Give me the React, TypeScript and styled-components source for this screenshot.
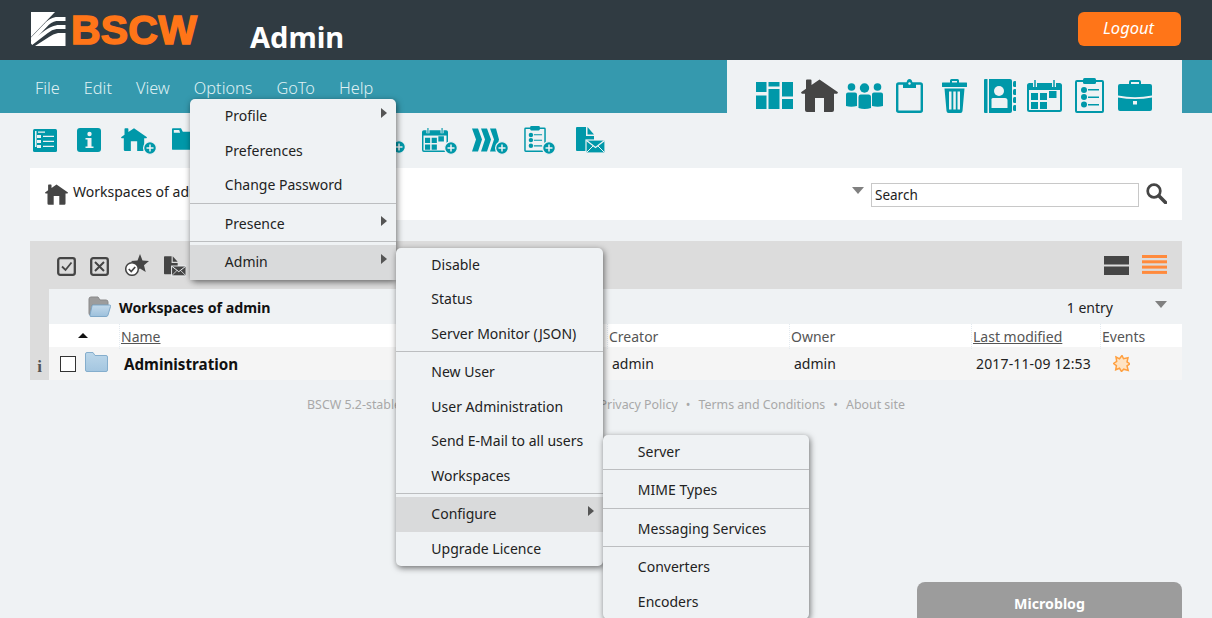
import React from "react";
import styled, { createGlobalStyle } from "styled-components";

const FONT = `"Noto Sans", "Open Sans", sans-serif`;
const TEAL = "#0098a9";
const DARK = "#454545";

const Global = createGlobalStyle`
  html, body { margin: 0; padding: 0; height: 100%; overflow: hidden; }
  body { background: #eff2f4; font-family: ${FONT}; font-size: 14px; color: #222; }
  #root { height: 618px; }
  * { box-sizing: border-box; }
`;

const Page = styled.div`
  position: relative;
  width: 1212px;
  height: 618px;
  overflow: hidden;
`;

/* ---------- header ---------- */
const Header = styled.header`
  height: 60px;
  background: #303b42;
  display: flex;
  align-items: flex-start;
  padding: 12px 31px 0 31px;
`;
const Logo = styled.div`
  display: flex;
  align-items: flex-start;
  gap: 5px;
  width: 219px;
`;
const LogoWord = styled.span`
  font-family: "Liberation Sans", Arial, sans-serif;
  font-weight: 700;
  font-size: 41px;
  line-height: 36px;
  color: #ff7518;
  -webkit-text-stroke: 1.5px #ff7518;
  letter-spacing: 0.2px;
`;
const AppTitle = styled.h1`
  margin: 8px 0 0;
  font-size: 29px;
  line-height: 34px;
  font-weight: 700;
  color: #fff;
  flex: 1;
`;
const LogoutButton = styled.button`
  width: 103px;
  height: 34px;
  border: 0;
  border-radius: 6px;
  background: #ff7518;
  color: #fff;
  font: italic 400 16.5px ${FONT};
  padding: 0 2px 3px 0;
`;

/* ---------- nav ---------- */
const NavBar = styled.nav`
  height: 53px;
  background: #3599ae;
  display: flex;
  justify-content: space-between;
  padding: 0 30px 0 35px;
`;
const NavMenu = styled.ul`
  list-style: none;
  margin: 0;
  padding: 17px 0 0;
  display: flex;
  gap: 24px;
`;
const NavItem = styled.li`
  position: relative;
  font-size: 16.3px;
  font-weight: 300;
  line-height: 22px;
  height: 22px;
  color: #dff0f3;
`;
const TabPanel = styled.div`
  width: 455px;
  background: #eff2f4;
  padding: 18px 0 0 25px;
  display: flex;
  align-items: flex-start;
`;
const TabCell = styled.span`
  width: 45px;
  height: 35px;
  display: flex;
  align-items: center;
  justify-content: center;
  color: ${(p) => (p.$active ? DARK : TEAL)};
`;

/* ---------- action toolbar ---------- */
const ActionBar = styled.div`
  display: flex;
  height: 55px;
  padding: 14px 0 0 33px;
  color: ${TEAL};
`;
const ActionCell = styled.span`
  width: ${(p) => p.$w}px;
  height: 27px;
  display: block;
  margin-top: ${(p) => p.$top || 0}px;
`;

/* ---------- breadcrumb ---------- */
const CrumbBar = styled.div`
  margin: 0 30px;
  height: 52px;
  background: #fff;
  display: flex;
  align-items: center;
  padding: 0 15px;
  color: ${DARK};
`;
const CrumbText = styled.span`
  margin: -5px 0 0 5px;
  color: #222;
  font-size: 14px;
  flex: 1;
`;
const DownArrow = styled.i`
  display: block;
  width: 0;
  height: 0;
  border-left: 6.5px solid transparent;
  border-right: 6.5px solid transparent;
  border-top: 7px solid #808080;
`;
const CrumbArrow = styled(DownArrow)`
  margin: -8px 7px 0 0;
`;
const SearchInput = styled.div`
  width: 268px;
  height: 24px;
  margin-top: 2px;
  border: 1px solid #c8c8c8;
  background: #fff;
  color: #222;
  font-size: 13.5px;
  line-height: 22px;
  padding-left: 3px;
`;
const SearchIcon = styled.span`
  display: block;
  margin: -1px 0 0 7px;
  height: 21px;
  color: ${DARK};
`;

/* ---------- list ---------- */
const ListPanel = styled.section`
  margin: 21px 30px 0;
`;
const ListTools = styled.div`
  height: 48px;
  background: #dcdcdc;
  display: flex;
  align-items: center;
  padding: 2px 15px 0 27px;
  color: ${DARK};
`;
const ToolIcon = styled.span`
  margin-left: ${(p) => p.$gap || 0}px;
  margin-top: ${(p) => -(p.$lift || 0)}px;
  height: 24px;
  display: flex;
  align-items: center;
`;
const Spacer = styled.span`
  flex: 1;
`;
const ListBody = styled.div`
  display: grid;
  grid-template-columns: 19px 1fr;
`;
const Gutter = styled.div`
  background: #dcdcdc;
  display: flex;
  align-items: flex-end;
  justify-content: center;
  padding-bottom: 5px;
  color: #555;
`;
const InfoGlyph = styled.span`
  font: 700 17px "Liberation Serif", serif;
  line-height: 16px;
`;
const Columns = styled.div`
  min-width: 0;
`;
const TitleRow = styled.div`
  height: 35px;
  display: flex;
  align-items: center;
  padding: 0 15px 0 39px;
`;
const TitleText = styled.strong`
  margin: 2px 0 0 8px;
  font-size: 14.2px;
  font-weight: 700;
  color: #111;
  flex: 1;
`;
const EntryCount = styled.span`
  margin: 2px 42px 0 0;
  font-size: 14px;
`;
const TitleArrow = styled(DownArrow)`
  margin-top: -4px;
`;
const gridCols = "72px 488px 182px 182px 129px 80px";
const HeadRow = styled.div`
  display: grid;
  grid-template-columns: ${gridCols};
  height: 23px;
  background: #fff;
  color: #555;
  font-size: 14px;
  line-height: 25px;
`;
const HeadCell = styled.span`
  position: relative;
  text-decoration: ${(p) => (p.$link ? "underline" : "none")};
  &::before {
    content: "";
    position: absolute;
    left: -2px;
    top: 0;
    bottom: 0;
    border-left: 1px dotted #e3eaf0;
  }
`;
const SortCell = styled.span`
  display: flex;
  justify-content: flex-end;
  padding: 9px 33px 0 0;
`;
const SortArrow = styled.i`
  display: block;
  width: 0;
  height: 0;
  border-left: 5.5px solid transparent;
  border-right: 5.5px solid transparent;
  border-bottom: 5px solid #111;
`;
const ItemRow = styled.div`
  display: grid;
  grid-template-columns: ${gridCols};
  height: 33px;
  background: #f5f5f5;
  align-items: center;
  font-size: 14px;
  color: #222;
`;
const RowStart = styled.span`
  display: flex;
  align-items: center;
  padding-left: 11px;
  gap: 9px;
`;
const RowCheck = styled.span`
  flex: none;
  width: 16px;
  height: 16px;
  border: 1px solid #333;
  background: #fff;
`;
const RowFolder = styled.span`
  flex: none;
  margin-top: -4px;
  height: 20px;
`;
const RowName = styled.strong`
  font-size: 15.2px;
  font-weight: 700;
  color: #111;
  padding-left: 3px;
`;
const RowCell = styled.span`
  padding-left: 3px;
`;
const RowDate = styled(RowCell)`
  letter-spacing: 0.15px;
`;
const EventCell = styled.span`
  padding-left: 11px;
  height: 17px;
`;

/* ---------- footer ---------- */
const Footer = styled.footer`
  display: flex;
  justify-content: center;
  gap: 8px;
  margin-top: 17px;
  font-size: 12.4px;
  line-height: 16px;
  color: #a8a8a8;
`;

/* ---------- microblog ---------- */
const Microblog = styled.div`
  position: absolute;
  left: 917px;
  top: 582px;
  width: 265px;
  height: 60px;
  border-radius: 8px 8px 0 0;
  background: #9c9c9c;
  color: #fff;
  font-weight: 700;
  font-size: 14.2px;
  text-align: center;
  padding-top: 12px;
  line-height: 20px;
`;

/* ---------- menus ---------- */
const Menu = styled.div`
  position: absolute;
  z-index: 5;
  left: ${(p) => p.$left};
  top: ${(p) => p.$top}px;
  width: 206.5px;
  background: #eff2f4;
  border-radius: 5px;
  box-shadow: 1px 2px 6px rgba(0, 0, 0, 0.55);
  color: #222;
  font-size: 14px;
  font-weight: 400;
`;
const MenuItem = styled.div`
  position: relative;
  height: 34.5px;
  line-height: 33px;
  padding-left: 35px;
  white-space: nowrap;
  background: ${(p) => (p.$open ? "#d9dadb" : "transparent")};
`;
const MenuRule = styled.div`
  height: 1px;
  margin-bottom: 3px;
  background: #bcbec0;
`;
const SubArrow = styled.i`
  position: absolute;
  right: 9px;
  top: 9px;
  width: 0;
  height: 0;
  border-top: 5px solid transparent;
  border-bottom: 5px solid transparent;
  border-left: 6px solid #555;
`;

/* ---------- glyphs ---------- */
type G = { w: number; h: number; node: React.ReactNode };
const W = "#eff2f4";
const glyphs: Record<string, G> = {
  mosaic: {
    w: 37,
    h: 28,
    node: (
      <path
        fill="currentColor"
        d="M0 0h10.5v10H0zM0 13.5h10.5V27H0zM12.5 0h11v4.500h-11zM12.5 7h11v20h-11zM26 0h11v14.5H26zM26 17h11v10H26z"
      />
    ),
  },
  house: {
    w: 37,
    h: 33,
    node: (
      <path
        fill="currentColor"
        d="M18.5 0.5L37 13.2 36.2 14.8H33V31q0 2-2 2h-8V19h-9v14H6q-2 0-2-2V14.8H.8L0 13.2 5 9.800V1.500q0-1 1-1h3.500q1 0 1 1V6z"
      />
    ),
  },
  people: {
    w: 37,
    h: 26,
    node: (
      <g fill="currentColor">
        <circle cx="5.5" cy="4" r="3.8" />
        <circle cx="18.5" cy="5" r="4.7" />
        <circle cx="31.5" cy="4" r="3.8" />
        <path d="M2 9.500h7q2 0 2 2V23Q5 24.500 0 23V11.500q0-2 2-2zM14.500 11.500h8q2.500 0 2.500 2.500V25q-6.500 2-12.500 0V14q0-2.500 2-2.500zM28 9.500h7q2 0 2 2V23q-5 1.500-11 0V11.500q0-2 2-2z" />
      </g>
    ),
  },
  clipboard: {
    w: 27,
    h: 34,
    node: (
      <g>
        <rect x="1.2" y="4.5" width="24.6" height="28.3" rx="1.5" fill="none" stroke="currentColor" strokeWidth="2.4" />
        <path fill="currentColor" d="M7 4h3.500Q11 0 13.500 0T16.500 4H20v5H7z" />
        <circle cx="13.5" cy="4.5" r="1.2" fill={W} />
      </g>
    ),
  },
  trash: {
    w: 25,
    h: 35,
    node: (
      <g fill="currentColor">
        <path d="M8 5V2.500Q8 1 9.500 1h6Q17 1 17 2.500V5h-2V3h-5v2z" />
        <rect x="0" y="4.5" width="25" height="4.5" rx="0.5" />
        <path d="M2.500 10.500h20L20.500 33q-.2 2-2 2h-12q-1.800 0-2-2zM7 13.500V31.500h2.500V13.500zM11.300 13.500V31.500h2.500V13.500zM15.500 13.500V31.500H18V13.500z" fillRule="evenodd" />
      </g>
    ),
  },
  contacts: {
    w: 32,
    h: 34,
    node: (
      <g fill="currentColor">
        <path d="M1 0h2.500v34H1q-1 0-1-1V1q0-1 1-1z" />
        <path d="M5 0h21q2 0 2 2v30q0 2-2 2H5z" />
        <circle cx="15" cy="12" r="5" fill={W} />
        <path fill={W} d="M9 19h12q2.500 0 2.500 2.500V29H7.500v-7.500Q7 19 9 19z" />
        <rect x="29" y="2" width="3.5" height="6" rx="1.5" />
        <rect x="29" y="10" width="3.5" height="6" rx="1.5" />
        <rect x="29" y="18" width="3.5" height="6" rx="1.5" />
        <rect x="29" y="26" width="3.5" height="6" rx="1.5" />
      </g>
    ),
  },
  calendar: {
    w: 35,
    h: 32,
    node: (
      <g>
        <rect x="1" y="4" width="33" height="27" rx="1.5" fill="none" stroke="currentColor" strokeWidth="2" />
        <path fill="currentColor" d="M1 4h33v6H1z" />
        <path stroke={W} strokeWidth="4" d="M8 0v7M27 0v7" />
        <path stroke="currentColor" strokeWidth="1.5" d="M8 0v7M27 0v7" />
        <path fill="currentColor" d="M4 13h7v7H4zM13 13h7v7h-7zM22 11h7.500v7H22zM4 22h7v7H4zM13 22h7v7h-7z" />
      </g>
    ),
  },
  checklist: {
    w: 29,
    h: 35,
    node: (
      <g>
        <rect x="1" y="3" width="27" height="31" rx="1" fill="none" stroke="currentColor" strokeWidth="2" />
        <rect x="8" y="0" width="13" height="6" rx="1.5" fill="currentColor" />
        <g fill="currentColor">
          <circle cx="9" cy="12" r="3" />
          <circle cx="9" cy="19" r="3" />
          <circle cx="9" cy="26.5" r="3" />
          <path d="M13 11h11v1.500H13zM13 18.500h11V20H13zM13 26h11v1.500H13z" />
        </g>
      </g>
    ),
  },
  briefcase: {
    w: 34,
    h: 31,
    node: (
      <g fill="currentColor">
        <path d="M11 5V2q0-2 2-2h8q2 0 2 2v3h-2V2h-8v3z" />
        <path d="M2 4h30q2 0 2 2v9.500q-17 3.500-34 0V6q0-2 2-2z" />
        <path d="M0 17.500q17 3 34 0V29q0 2-2 2H2q-2 0-2-2zM15 21v3.500h4V21z" fillRule="evenodd" />
      </g>
    ),
  },
  list: {
    w: 24,
    h: 23,
    node: (
      <g>
        <rect x="0" y="0" width="24" height="23" rx="1.5" fill="currentColor" />
        <g fill={W}>
          <path d="M2 2h1.500v16H2zM5 2.500h7v1.200H5z" />
          <rect x="4" y="6" width="4" height="3" />
          <rect x="4" y="11" width="4" height="3" />
          <rect x="4" y="16" width="4" height="3" />
          <path d="M10 6.800h11V8H10zM10 11.800h11V13H10zM10 16.800h11V18H10z" />
        </g>
      </g>
    ),
  },
  info: {
    w: 24,
    h: 24,
    node: (
      <g>
        <rect width="24" height="24" rx="3" fill="currentColor" />
        <circle cx="12.5" cy="6" r="2.2" fill={W} />
        <path fill={W} d="M8.500 10h6v8.500h2V20h-8v-1.500h2V11.500h-2z" />
      </g>
    ),
  },
  folderFill: {
    w: 30,
    h: 24,
    node: <path fill="currentColor" d="M1 0h9l2 4h17q1 0 1 1v18q0 1-1 1H1q-1 0-1-1V1q0-1 1-1zM2 2v3h7L8 2z" fillRule="evenodd" />,
  },
  chevrons: {
    w: 27,
    h: 23,
    node: <path fill="currentColor" d="M0 0h6l4 11-4 12H0l4-12zM9 0h6l4 11-4 12H9l4-12zM18 0h6l3 11-3 12h-6l4-12z" />,
  },
  docmail: {
    w: 29,
    h: 26,
    node: (
      <g>
        <path fill="currentColor" d="M1 0h9v9h8v15H1q-1 0-1-1V1q0-1 1-1z" />
        <path fill="currentColor" d="M11.500 0l6.500 7.500h-6.500z" />
        <rect x="10" y="13" width="19" height="13" fill="currentColor" stroke={W} strokeWidth="1.2" />
        <path d="M10.500 13.500l9 7 9-7" fill="none" stroke={W} strokeWidth="1.3" />
        <path d="M10.500 25.500l6.500-6.500M28.500 25.500L22 19" stroke={W} strokeWidth="1" />
      </g>
    ),
  },
};

const Plus = ({ x, y }: { x: number; y: number }) => (
  <g>
    <circle cx={x} cy={y} r="6.4" fill="currentColor" stroke={W} strokeWidth="1.3" />
    <path d={`M${x - 3.5} ${y}h7M${x} ${y - 3.5}v7`} stroke={W} strokeWidth="1.5" />
  </g>
);

const Glyph = ({ name, w, h, plus }: { name: string; w?: number; h?: number; plus?: boolean }) => {
  const g = glyphs[name];
  const gw = w ?? g.w;
  const gh = h ?? g.h;
  if (plus) {
    return (
      <svg width={gw + 10} height={gh + 4} viewBox={`0 0 ${gw + 10} ${gh + 4}`}>
        <svg x="0" y="0" width={gw} height={gh} viewBox={`0 0 ${g.w} ${g.h}`}>
          {g.node}
        </svg>
        <Plus x={gw + 3} y={gh - 4} />
      </svg>
    );
  }
  return (
    <svg width={gw} height={gh} viewBox={`0 0 ${g.w} ${g.h}`}>
      {g.node}
    </svg>
  );
};

const OpenFolder = () => (
  <svg width="23" height="21" viewBox="0 0 23 21">
    <defs>
      <linearGradient id="of" x1="0" y1="0" x2="0" y2="1">
        <stop offset="0" stopColor="#c3d9ea" />
        <stop offset="1" stopColor="#9cc0dc" />
      </linearGradient>
    </defs>
    <path d="M1 3q0-2 2-2h7l2 3h6q2 0 2 2v3H4l-2 10Q1 19 1 17z" fill="#9c9c9c" stroke="#8a8a8a" />
    <path d="M5 9h16.500q1.500 0 1 1.500L20 19q-.3 1.500-2 1.500H3Q1.500 20.500 2 19L4 10q.3-1 1-1z" fill="url(#of)" stroke="#7fa8c8" />
  </svg>
);
const BlueFolder = () => (
  <svg width="23" height="20" viewBox="0 0 23 20">
    <defs>
      <linearGradient id="bf" x1="0" y1="0" x2="0" y2="1">
        <stop offset="0" stopColor="#bcd7ea" />
        <stop offset="1" stopColor="#a4c6e0" />
      </linearGradient>
    </defs>
    <path
      d="M.5 2q0-1.500 1.500-1.500h6l2 3h11Q22.500 3.500 22.500 5v13q0 1.500-1.500 1.500H2Q.5 19.500.5 18z"
      fill="url(#bf)"
      stroke="#85aecd"
    />
  </svg>
);
const BoxIcon = ({ cross }: { cross?: boolean }) => (
  <svg width="19" height="19" viewBox="0 0 19 19" fill="none" stroke="currentColor">
    <rect x="1.2" y="1.2" width="16.6" height="16.6" rx="2" strokeWidth="2.3" />
    {cross ? <path d="M5 5l9 9M14 5l-9 9" strokeWidth="2" /> : <path d="M5 9.500l3.500 3.500L14.500 5.500" strokeWidth="1.8" />}
  </svg>
);
const StarCheck = () => (
  <svg width="24" height="22" viewBox="0 0 24 22">
    <path fill="currentColor" d="M15 0l2.500 6.500 6.500.5-5 4.300 1.700 6.700L15 14.500 9.500 18l1.500-6.700-5-4.300 6.500-.5z" />
    <circle cx="7" cy="15" r="6.300" fill="#fff" stroke="currentColor" strokeWidth="1.5" />
    <path d="M3.800 15l2.400 2.500 4-4.500" fill="none" stroke="currentColor" strokeWidth="1.7" />
  </svg>
);
const MagnifierIcon = () => (
  <svg width="21" height="21" viewBox="0 0 21 21" fill="none" stroke="currentColor">
    <circle cx="8" cy="8" r="6.3" strokeWidth="2.7" />
    <path d="M12.800 12.800L19.500 19.500" strokeWidth="3.6" strokeLinecap="round" />
  </svg>
);
const RowsIcon = () => (
  <svg width="25" height="19" viewBox="0 0 25 19" fill="currentColor">
    <rect width="25" height="8.5" />
    <rect y="10.5" width="25" height="8.5" />
  </svg>
);
const StripesIcon = () => (
  <svg width="25" height="19" viewBox="0 0 25 19" fill="#ff8a3c">
    <rect width="25" height="3" />
    <rect y="5.3" width="25" height="3" />
    <rect y="10.6" width="25" height="3" />
    <rect y="15.9" width="25" height="3" />
  </svg>
);
const BurstIcon = () => (
  <svg width="17" height="17" viewBox="0 0 17 17">
    <path
      d="M3 2l3.500 1.800L9 .5l1.500 3.200 4.500-1-1 4.300 3 1.800-3 2 1.200 4.700-4.500-1.300L8.500 16.500l-2-3.200-3.800 1.500.7-4.200L.5 8.500l3.200-2.200z"
      fill="#ffe3c2"
      stroke="#ffa040"
      strokeWidth="1.5"
    />
  </svg>
);
const LogoMark = () => (
  <svg width="35" height="34" viewBox="0 0 35 34">
    <path fill="#fff" d="M0 0h24L0 25z" />
    <path d="M0 28.500L14 14Q19 8 25 7h9.500" fill="none" stroke="#fff" strokeWidth="4" />
    <path d="M0 31.500L15 20Q20 16 26 15h8.500" fill="none" stroke="#fff" strokeWidth="3.8" />
    <path fill="#fff" d="M4 34L18 25q4-3 9-4h7.500V34z" />
  </svg>
);

const TabIcons: { name: string; active?: boolean }[] = [
  { name: "mosaic" },
  { name: "house", active: true },
  { name: "people" },
  { name: "clipboard" },
  { name: "trash" },
  { name: "contacts" },
  { name: "calendar" },
  { name: "checklist" },
  { name: "briefcase" },
];
const Actions: { name: string; cell: number; plus?: boolean; w?: number; h?: number; top?: number }[] = [
  { name: "list", cell: 44, top: 2 },
  { name: "info", cell: 44, top: 1 },
  { name: "house", cell: 51, plus: true, w: 26, h: 25 },
  { name: "folderFill", cell: 50, plus: true, w: 27, h: 24 },
  { name: "clipboard", cell: 50, plus: true, w: 20, h: 24 },
  { name: "checklist", cell: 50, plus: true, w: 20, h: 24 },
  { name: "contacts", cell: 50, plus: true, w: 24, h: 24 },
  { name: "contacts", cell: 50, plus: true, w: 24, h: 24 },
  { name: "calendar", cell: 50, plus: true, w: 26, h: 24, top: 1 },
  { name: "chevrons", cell: 52, plus: true, w: 27, h: 24, top: 1 },
  { name: "checklist", cell: 52, plus: true, w: 22, h: 26, top: -1 },
  { name: "docmail", cell: 30 },
];

export default function App() {
  return (
    <Page>
      <Global />
      <Header>
        <Logo>
          <LogoMark />
          <LogoWord>BSCW</LogoWord>
        </Logo>
        <AppTitle>Admin</AppTitle>
        <LogoutButton>Logout</LogoutButton>
      </Header>

      <NavBar>
        <NavMenu>
          <NavItem>File</NavItem>
          <NavItem>Edit</NavItem>
          <NavItem>View</NavItem>
          <NavItem>
            Options
            <Menu $left="-4px" $top={22}>
              <MenuItem>
                Profile
                <SubArrow />
              </MenuItem>
              <MenuItem>Preferences</MenuItem>
              <MenuItem>Change Password</MenuItem>
              <MenuRule />
              <MenuItem>
                Presence
                <SubArrow />
              </MenuItem>
              <MenuRule />
              <MenuItem $open>
                Admin
                <SubArrow />
                <Menu $left="100%" $top={2.5}>
                  <MenuItem>Disable</MenuItem>
                  <MenuItem>Status</MenuItem>
                  <MenuItem>Server Monitor (JSON)</MenuItem>
                  <MenuRule />
                  <MenuItem>New User</MenuItem>
                  <MenuItem>User Administration</MenuItem>
                  <MenuItem>Send E-Mail to all users</MenuItem>
                  <MenuItem>Workspaces</MenuItem>
                  <MenuRule />
                  <MenuItem $open>
                    Configure
                    <SubArrow />
                    <Menu $left="100%" $top={-62.5}>
                      <MenuItem>Server</MenuItem>
                      <MenuRule />
                      <MenuItem>MIME Types</MenuItem>
                      <MenuRule />
                      <MenuItem>Messaging Services</MenuItem>
                      <MenuRule />
                      <MenuItem>Converters</MenuItem>
                      <MenuItem>Encoders</MenuItem>
                    </Menu>
                  </MenuItem>
                  <MenuItem>Upgrade Licence</MenuItem>
                </Menu>
              </MenuItem>
            </Menu>
          </NavItem>
          <NavItem>GoTo</NavItem>
          <NavItem>Help</NavItem>
        </NavMenu>
        <TabPanel>
          {TabIcons.map((t) => (
            <TabCell key={t.name} $active={t.active}>
              <Glyph name={t.name} />
            </TabCell>
          ))}
        </TabPanel>
      </NavBar>

      <ActionBar>
        {Actions.map((a, i) => (
          <ActionCell key={i} $w={a.cell} $top={a.top}>
            <Glyph name={a.name} plus={a.plus} w={a.w} h={a.h} />
          </ActionCell>
        ))}
      </ActionBar>

      <CrumbBar>
        <Glyph name="house" w={23} h={21} />
        <CrumbText>Workspaces of admin</CrumbText>
        <CrumbArrow />
        <SearchInput>Search</SearchInput>
        <SearchIcon>
          <MagnifierIcon />
        </SearchIcon>
      </CrumbBar>

      <ListPanel>
        <ListTools>
          <ToolIcon>
            <BoxIcon />
          </ToolIcon>
          <ToolIcon $gap={14}>
            <BoxIcon cross />
          </ToolIcon>
          <ToolIcon $gap={16} $lift={2}>
            <StarCheck />
          </ToolIcon>
          <ToolIcon $gap={15}>
            <Glyph name="docmail" w={22} h={22} />
          </ToolIcon>
          <Spacer />
          <ToolIcon $lift={2}>
            <RowsIcon />
          </ToolIcon>
          <ToolIcon $gap={13} $lift={3}>
            <StripesIcon />
          </ToolIcon>
        </ListTools>
        <ListBody>
          <Gutter>
            <InfoGlyph>i</InfoGlyph>
          </Gutter>
          <Columns>
            <TitleRow>
              <OpenFolder />
              <TitleText>Workspaces of admin</TitleText>
              <EntryCount>1 entry</EntryCount>
              <TitleArrow />
            </TitleRow>
            <HeadRow>
              <SortCell>
                <SortArrow />
              </SortCell>
              <HeadCell $link>Name</HeadCell>
              <HeadCell>Creator</HeadCell>
              <HeadCell>Owner</HeadCell>
              <HeadCell $link>Last modified</HeadCell>
              <HeadCell>Events</HeadCell>
            </HeadRow>
            <ItemRow>
              <RowStart>
                <RowCheck />
                <RowFolder>
                  <BlueFolder />
                </RowFolder>
              </RowStart>
              <RowName>Administration</RowName>
              <RowCell>admin</RowCell>
              <RowCell>admin</RowCell>
              <RowDate>2017-11-09 12:53</RowDate>
              <EventCell>
                <BurstIcon />
              </EventCell>
            </ItemRow>
          </Columns>
        </ListBody>
      </ListPanel>

      <Footer>
        <span>BSCW 5.2-stable</span>
        <span>•</span>
        <span>© 2017 OrbiTeam Software</span>
        <span>•</span>
        <span>Privacy Policy</span>
        <span>•</span>
        <span>Terms and Conditions</span>
        <span>•</span>
        <span>About site</span>
      </Footer>

      <Microblog>Microblog</Microblog>
    </Page>
  );
}
